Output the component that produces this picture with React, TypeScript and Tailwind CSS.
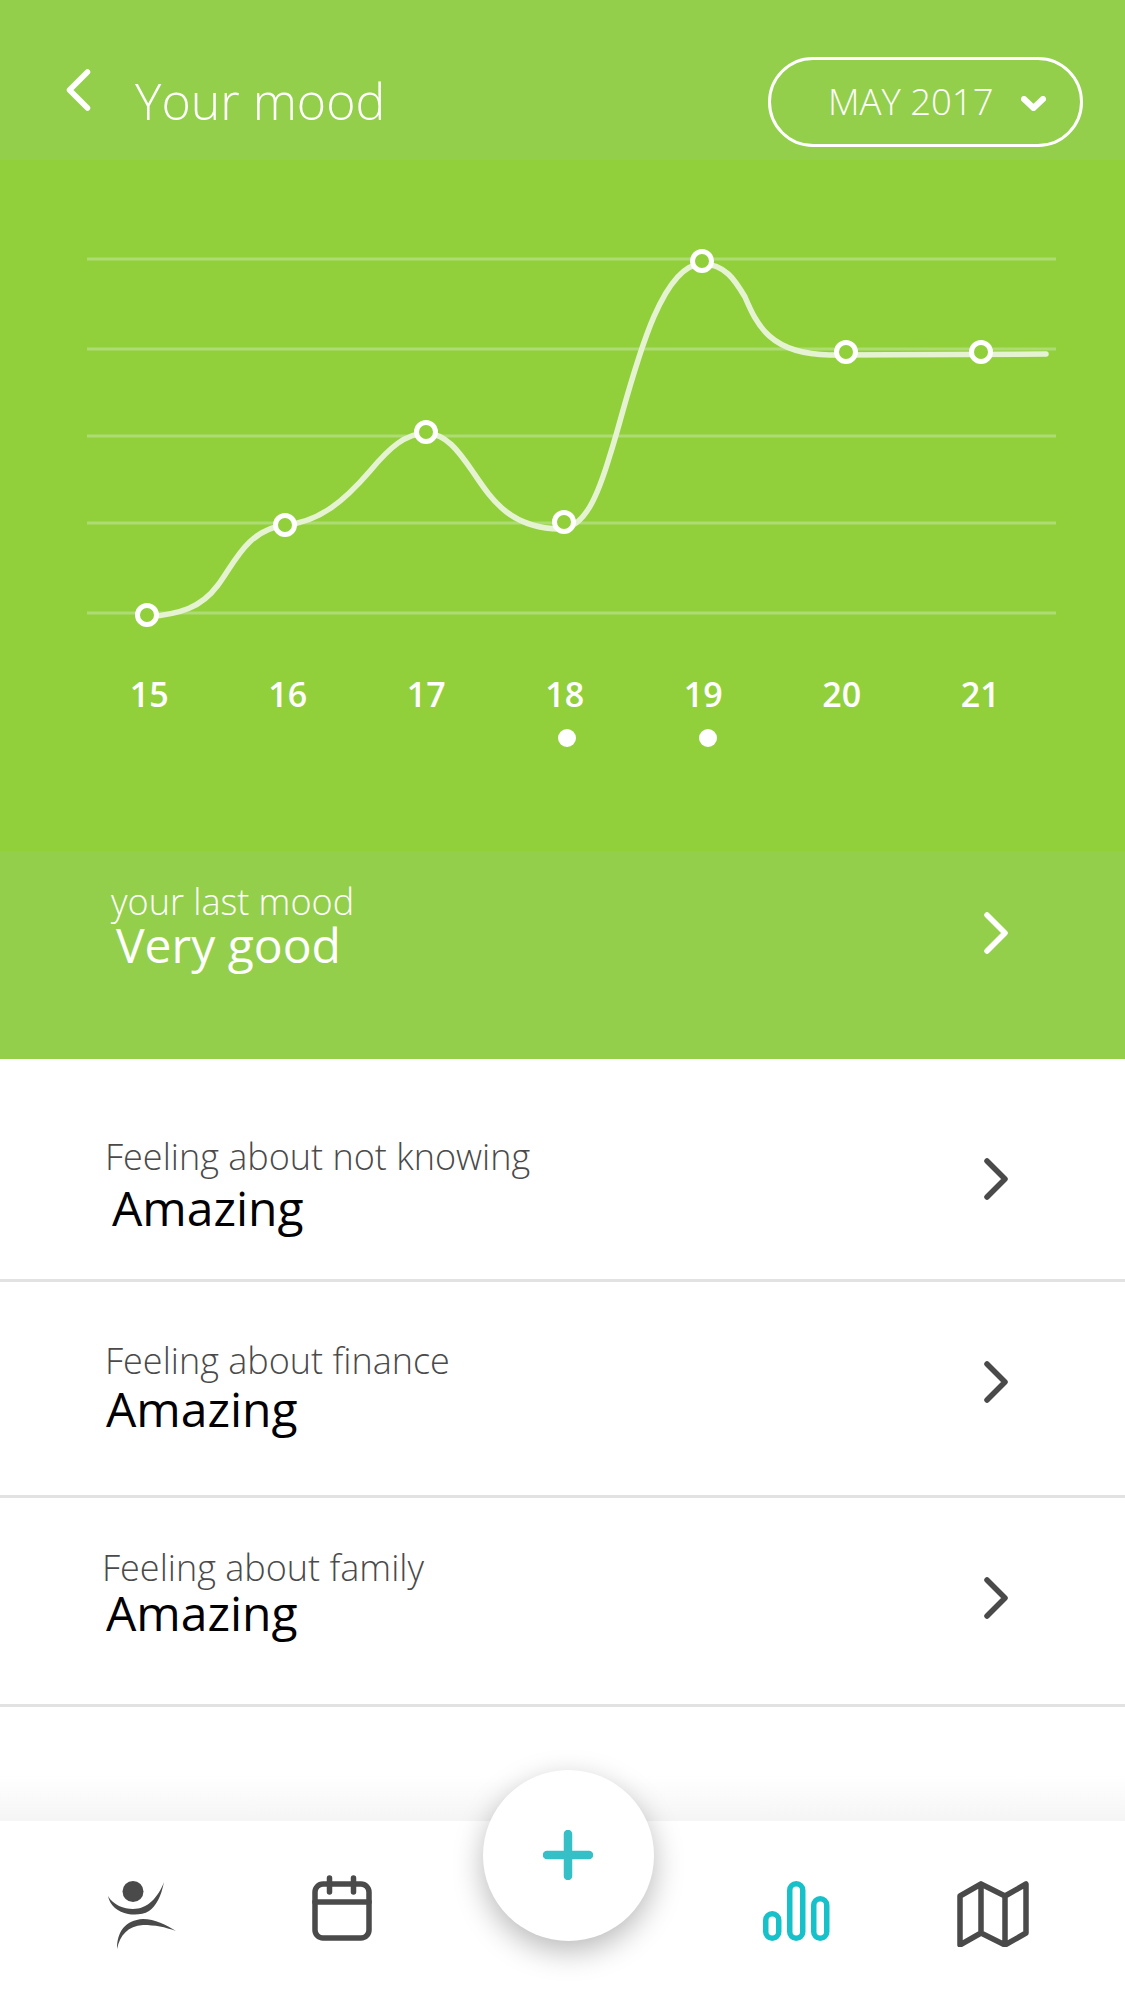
const DAYS = ['15', '16', '17', '18', '19', '20', '21'];

const POINTS = [
  [147, 615],
  [285, 525],
  [426, 432],
  [564, 522],
  [702, 261],
  [846, 352],
  [981, 352],
];

const GRID_LINES = [259, 349, 436, 523, 613];

const MOOD_PATH =
  'M147 617 C180 614 201 608 218 585 C235 562 247 530 285 525 C320 522 345 500 370 471 C390 447 405 434 426 433 C446 434 458 450 473 472 C492 500 510 528 560 529 C585 528 598 495 610 455 C628 400 655 264 702 264 C725 264 735 280 745 297 C757 325 770 354 830 355 L1046 354';

function Chevron({ className }: { className: string }) {
  return (
    <svg viewBox="0 0 24 42" fill="none" className={className}>
      <path d="M3 3 L21 21 L3 39" stroke="currentColor" strokeWidth="5.5" strokeLinecap="round" strokeLinejoin="round" />
    </svg>
  );
}

function MoodChart() {
  return (
    <svg viewBox="0 160 1125 500" className="block h-[500px] w-[1125px]" fill="none">
      {GRID_LINES.map((y) => (
        <line key={y} x1="87" x2="1056" y1={y} y2={y} stroke="#aedc74" strokeWidth="3" />
      ))}
      <path d={MOOD_PATH} stroke="#e6f3d3" strokeWidth="5.5" strokeLinecap="round" />
      {POINTS.map(([cx, cy]) => (
        <circle key={cx} cx={cx} cy={cy} r="9.5" fill="#92d03b" stroke="#fff" strokeWidth="5" />
      ))}
    </svg>
  );
}

function PersonIcon() {
  return (
    <svg viewBox="108 1881 67 67" className="h-[67px] w-[67px] overflow-visible" fill="#4a4a4a">
      <ellipse cx="133" cy="1891.5" rx="10.5" ry="10.5" />
      <path d="M108 1896 C113 1905 124 1909 133 1909 C147 1909 158 1898 164 1882 C161 1897 156 1906 149 1911 C143 1915 134 1915 128 1914 C118 1912 110 1906 108 1896 Z" />
      <path d="M117 1949 C117 1932 125 1920 143 1919 C155 1919 166 1925 176 1931 C165 1927 155 1925 143 1925 C128 1926 120 1935 117 1949 Z" />
    </svg>
  );
}

function CalendarIcon() {
  return (
    <svg viewBox="0 0 60 66" className="-mt-[6px] ml-[137px] h-[66px] w-[60px]" fill="none" stroke="#4a4a4a" strokeWidth="5.5" strokeLinecap="round">
      <rect x="3" y="9" width="54" height="54" rx="8" />
      <path d="M3 27 H57 M17.5 3 V17 M41.5 3 V17" />
    </svg>
  );
}

function BarsIcon() {
  return (
    <svg viewBox="0 0 67 60" className="ml-[391px] h-[60px] w-[67px]" fill="none" stroke="#17c1ca" strokeWidth="5.5">
      <rect x="2.75" y="32.75" width="13" height="24.5" rx="6.5" />
      <rect x="26.75" y="2.75" width="13" height="54.5" rx="6.5" />
      <rect x="50.75" y="17.75" width="13" height="39.5" rx="6.5" />
    </svg>
  );
}

function MapIcon() {
  return (
    <svg viewBox="0 0 72 66" className="ml-[127px] h-[66px] w-[72px]" fill="none" stroke="#4a4a4a" strokeWidth="5.5" strokeLinejoin="round" strokeLinecap="round">
      <path d="M3 15 L24 3 L48 15 L69 3 V52 L48 64 L24 52 L3 64 Z M24 3 V52 M48 15 V64" />
    </svg>
  );
}

export default function App() {
  return (
    <div className="relative flex h-[2001px] w-[1125px] flex-col overflow-hidden bg-white font-['Open_Sans',sans-serif]">
      <header className="flex h-[160px] items-start bg-[#94cf4c] text-white">
        <Chevron className="ml-[66px] mt-[69px] h-[42px] w-[25px] rotate-180" />
        <h1 className="ml-[44px] mt-[73px] text-[50px] font-light leading-[56px]">Your mood</h1>
        <div className="ml-auto mr-[42px] mt-[57px] flex h-[90px] w-[315px] items-center rounded-full border-[3px] border-white pl-[57px]">
          <span className="mb-[2px] text-[36.5px] font-light leading-[44px]">MAY 2017</span>
          <svg viewBox="0 0 25 15" className="ml-[27px] mt-[3px] h-[15px] w-[25px]" fill="none">
            <path d="M3 3 L12.5 12 L22 3" stroke="#fff" strokeWidth="6" strokeLinecap="round" strokeLinejoin="round" />
          </svg>
        </div>
      </header>

      <section className="h-[691px] bg-[#92d03b] text-white">
        <MoodChart />
        <div className="ml-[80px] mt-[14px] flex text-[34px] font-semibold leading-[40px]">
          {DAYS.map((day) => (
            <div key={day} className="flex w-[138.5px] flex-col items-center">
              <span>{day}</span>
            </div>
          ))}
        </div>
        <div className="ml-[558px] mt-[15px] flex gap-[123px]">
          <span className="h-[18px] w-[18px] rounded-full bg-white" />
          <span className="h-[18px] w-[18px] rounded-full bg-white" />
        </div>
      </section>

      <section className="flex h-[208px] items-start bg-[#94cf4c] pl-[111px] pr-[117px] text-white">
        <div className="flex-1 pt-[29px]">
          <div className="text-[36px] font-light leading-[44px]">your last mood</div>
          <div className="-mt-[7px] ml-[5px] text-[48px] leading-[56px]">Very good</div>
        </div>
        <Chevron className="mt-[61px] h-[42px] w-[24px]" />
      </section>

      <div className="flex h-[223px] items-start border-b-[3px] border-[#e2e2e2] pl-[106px] pr-[117px]">
        <div className="flex-1 pt-[76px]">
          <div className="-ml-[1px] text-[36px] font-light leading-[44px] text-[#4a4a4a]">Feeling about not knowing</div>
          <div className="ml-[6px] mt-[1px] text-[48px] leading-[56px] text-black">Amazing</div>
        </div>
        <Chevron className="mt-[99px] h-[42px] w-[24px] text-[#4a4a4a]" />
      </div>

      <div className="flex h-[216px] items-start border-b-[3px] border-[#e2e2e2] pl-[106px] pr-[117px]">
        <div className="flex-1 pt-[57px]">
          <div className="-ml-[1px] text-[36px] font-light leading-[44px] text-[#4a4a4a]">Feeling about finance</div>
          <div className="-mt-[2px] text-[48px] leading-[56px] text-black">Amazing</div>
        </div>
        <Chevron className="mt-[79px] h-[42px] w-[24px] text-[#4a4a4a]" />
      </div>

      <div className="flex h-[209px] items-start border-b-[3px] border-[#e2e2e2] pl-[106px] pr-[117px]">
        <div className="flex-1 pt-[48px]">
          <div className="-ml-[4px] text-[36px] font-light leading-[44px] text-[#4a4a4a]">Feeling about family</div>
          <div className="-mt-[5px] text-[48px] leading-[56px] text-black">Amazing</div>
        </div>
        <Chevron className="mt-[79px] h-[42px] w-[24px] text-[#4a4a4a]" />
      </div>

      <div className="flex-1 bg-gradient-to-b from-white from-60% to-[#f5f5f5]" />

      <nav className="flex h-[180px] items-start bg-white pl-[108px] pt-[60px]">
        <PersonIcon />
        <CalendarIcon />
        <BarsIcon />
        <MapIcon />
      </nav>

      <button className="absolute left-[483px] top-[1770px] flex h-[171px] w-[171px] items-center justify-center rounded-full bg-white shadow-[0_10px_30px_rgba(0,0,0,0.28)]">
        <svg viewBox="0 0 50 50" className="-ml-[1px] -mt-[2px] h-[50px] w-[50px]" fill="none">
          <path d="M25 4 V46 M4 25 H46" stroke="#35bfc6" strokeWidth="8.5" strokeLinecap="round" />
        </svg>
      </button>
    </div>
  );
}
